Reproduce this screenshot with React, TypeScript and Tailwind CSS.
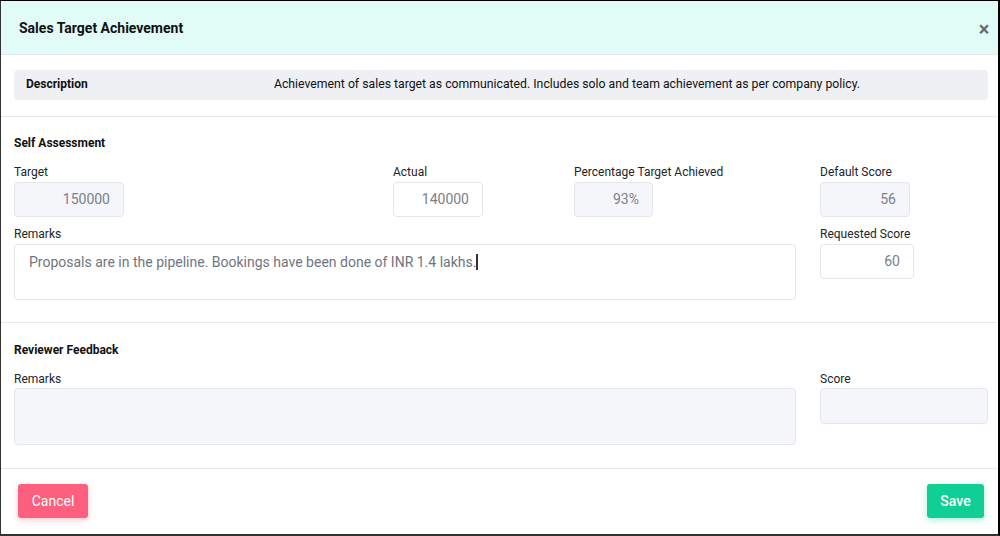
import React from "react";

const label = "block text-[12px] leading-[16px] text-[#212529]";
const inputBase =
  "h-[35px] rounded-[4px] border border-[#e3e6ea] text-right pr-[13px] text-[14px] text-[#7b8089] flex items-center justify-end";

export default function App() {
  return (
    <div
      className="w-[1000px] h-[536px] bg-white border-t border-l border-r-2 border-b-2 border-t-black border-l-[#333] border-r-black border-b-[#333] flex flex-col overflow-hidden"
      style={{ fontFamily: "Roboto, 'Liberation Sans', sans-serif" }}
    >
      {/* Header */}
      <div className="h-[54px] shrink-0 bg-[#e1fbf7] border-b border-[#e6e9ec] flex items-center justify-between pl-[18px] pr-[4px] pt-[2px]">
        <h1 className="text-[14px] font-bold text-[#111]">Sales Target Achievement</h1>
        <span className="text-[20px] leading-none font-bold text-[#6b6b6b] w-[20px] text-center">×</span>
      </div>

      {/* Description */}
      <div className="pl-[13px] pr-[10px] pt-[15px] pb-[16px] border-b border-[#e6e9ec]">
        <div className="h-[30px] rounded-[4px] bg-[#eef0f4] grid grid-cols-[132px_1fr] items-center text-[12.25px] text-[#111] pb-[2px]">
          <span className="pl-[12px] font-bold text-[12px]">Description</span>
          <span className="text-center">
            Achievement of sales target as communicated. Includes solo and team achievement as per company policy.
          </span>
        </div>
      </div>

      {/* Self Assessment */}
      <div className="px-[13px] pt-[18px] pb-[22px] border-b border-[#e6e9ec]">
        <h2 className="text-[12px] leading-[16px] font-bold text-[#111]">Self Assessment</h2>
        <div className="mt-[13px] grid grid-cols-[379px_181px_246px_1fr]">
          <div>
            <span className={label}>Target</span>
            <div className={`${inputBase} mt-[2px] w-[110px] bg-[#f5f6f9]`}>150000</div>
          </div>
          <div>
            <span className={label}>Actual</span>
            <div className={`${inputBase} mt-[2px] w-[90px] bg-white`}>140000</div>
          </div>
          <div>
            <span className={label}>Percentage Target Achieved</span>
            <div className={`${inputBase} mt-[2px] w-[79px] bg-[#f5f6f9]`}>93%</div>
          </div>
          <div>
            <span className={label}>Default Score</span>
            <div className={`${inputBase} mt-[2px] w-[90px] bg-[#f5f6f9]`}>56</div>
          </div>
        </div>
        <div className="mt-[9px] grid grid-cols-[782px_1fr] gap-x-[24px]">
          <div>
            <span className={label}>Remarks</span>
            <div className="mt-[2px] h-[56px] rounded-[4px] border border-[#e3e6ea] bg-white pl-[14px] pt-[8px] text-[14px] leading-[18px] text-[#6f7580]">
              Proposals are in the pipeline. Bookings have been done of INR 1.4 lakhs.
              <span className="inline-block w-[1.5px] h-[16px] bg-[#333] align-[-3px]" />
            </div>
          </div>
          <div>
            <span className={label}>Requested Score</span>
            <div className={`${inputBase} mt-[2px] w-[94px] h-[34px] bg-white`}>60</div>
          </div>
        </div>
      </div>

      {/* Reviewer Feedback */}
      <div className="px-[13px] pt-[19px] pb-[23px] border-b border-[#e6e9ec]">
        <h2 className="text-[12px] leading-[16px] font-bold text-[#111]">Reviewer Feedback</h2>
        <div className="mt-[13px] grid grid-cols-[782px_1fr] gap-x-[24px]">
          <div>
            <span className={label}>Remarks</span>
            <div className="mt-[1px] h-[57px] rounded-[4px] border border-[#e3e6ea] bg-[#f5f6f9]" />
          </div>
          <div>
            <span className={label}>Score</span>
            <div className="mt-[1px] h-[36px] w-[168px] rounded-[4px] border border-[#e3e6ea] bg-[#f5f6f9]" />
          </div>
        </div>
      </div>

      {/* Footer */}
      <div className="flex-1 flex items-start justify-between pl-[17px] pr-[14px] pt-[15px]">
        <button className="h-[34px] w-[70px] rounded-[3px] bg-[#fd5f7e] text-white text-[14px] shadow-[0_2px_6px_rgba(253,95,126,0.35)]">
          Cancel
        </button>
        <button className="h-[34px] w-[57px] rounded-[3px] bg-[#10cf94] text-white text-[14px] font-medium shadow-[0_2px_6px_rgba(16,207,148,0.35)]">
          Save
        </button>
      </div>
    </div>
  );
}
